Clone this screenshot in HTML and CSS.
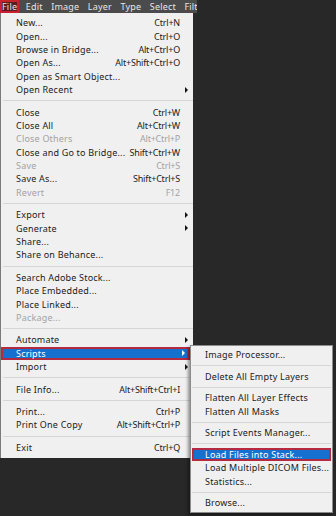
FILE: index.html
```html
<!DOCTYPE html>
<html>
<head>
  <title>File menu</title>
  <link rel="stylesheet" href="styles.css">
</head>
<body>
  <div class="menubar">
    <span class="top active">File</span>
    <span class="top">Edit</span>
    <span class="top">Image</span>
    <span class="top">Layer</span>
    <span class="top">Type</span>
    <span class="top">Select</span>
    <span class="top">Filter</span>
  </div>

  <div class="menu file-menu">
    <div class="row"><span>New...</span><span class="key">Ctrl+N</span><i></i></div>
    <div class="row"><span>Open...</span><span class="key">Ctrl+O</span><i></i></div>
    <div class="row"><span>Browse in Bridge...</span><span class="key">Alt+Ctrl+O</span><i></i></div>
    <div class="row"><span>Open As...</span><span class="key">Alt+Shift+Ctrl+O</span><i></i></div>
    <div class="row"><span>Open as Smart Object...</span><span class="key"></span><i></i></div>
    <div class="row"><span>Open Recent</span><span class="key"></span><i class="arrow"></i></div>
    <div class="sep"></div>
    <div class="row"><span>Close</span><span class="key">Ctrl+W</span><i></i></div>
    <div class="row"><span>Close All</span><span class="key">Alt+Ctrl+W</span><i></i></div>
    <div class="row off"><span>Close Others</span><span class="key">Alt+Ctrl+P</span><i></i></div>
    <div class="row"><span>Close and Go to Bridge...</span><span class="key">Shift+Ctrl+W</span><i></i></div>
    <div class="row off"><span>Save</span><span class="key">Ctrl+S</span><i></i></div>
    <div class="row"><span>Save As...</span><span class="key">Shift+Ctrl+S</span><i></i></div>
    <div class="row off"><span>Revert</span><span class="key">F12</span><i></i></div>
    <div class="sep"></div>
    <div class="row"><span>Export</span><span class="key"></span><i class="arrow"></i></div>
    <div class="row"><span>Generate</span><span class="key"></span><i class="arrow"></i></div>
    <div class="row"><span>Share...</span><span class="key"></span><i></i></div>
    <div class="row"><span>Share on Behance...</span><span class="key"></span><i></i></div>
    <div class="sep"></div>
    <div class="row"><span>Search Adobe Stock...</span><span class="key"></span><i></i></div>
    <div class="row"><span>Place Embedded...</span><span class="key"></span><i></i></div>
    <div class="row"><span>Place Linked...</span><span class="key"></span><i></i></div>
    <div class="row off"><span>Package...</span><span class="key"></span><i></i></div>
    <div class="sep"></div>
    <div class="row"><span>Automate</span><span class="key"></span><i class="arrow"></i></div>
    <div class="row hl"><span>Scripts</span><span class="key"></span><i class="arrow"></i></div>
    <div class="row"><span>Import</span><span class="key"></span><i class="arrow"></i></div>
    <div class="sep"></div>
    <div class="row"><span>File Info...</span><span class="key">Alt+Shift+Ctrl+I</span><i></i></div>
    <div class="sep"></div>
    <div class="row"><span>Print...</span><span class="key">Ctrl+P</span><i></i></div>
    <div class="row"><span>Print One Copy</span><span class="key">Alt+Shift+Ctrl+P</span><i></i></div>
    <div class="sep"></div>
    <div class="row"><span>Exit</span><span class="key">Ctrl+Q</span><i></i></div>
  </div>

  <div class="menu submenu">
    <div class="row"><span>Image Processor...</span></div>
    <div class="sep"></div>
    <div class="row"><span>Delete All Empty Layers</span></div>
    <div class="sep"></div>
    <div class="row"><span>Flatten All Layer Effects</span></div>
    <div class="row"><span>Flatten All Masks</span></div>
    <div class="sep"></div>
    <div class="row"><span>Script Events Manager...</span></div>
    <div class="sep"></div>
    <div class="row hl"><span>Load Files into Stack...</span></div>
    <div class="row"><span>Load Multiple DICOM Files...</span></div>
    <div class="row"><span>Statistics...</span></div>
    <div class="sep"></div>
    <div class="row"><span>Browse...</span></div>
  </div>
</body>
</html>
```

FILE: styles.css
```css
body {
  margin: 0;
  background: #282828;
  font-family: "Noto Sans", "Open Sans", sans-serif;
  font-size: 9px;
  letter-spacing: 0.2px;
  width: 336px;
  height: 516px;
  overflow: hidden;
  position: relative;
}
.menubar {
  width: 197px;
  height: 13px;
  background: #4b4b4b;
  display: flex;
  overflow: hidden;
  white-space: nowrap;
}
.top {
  flex-shrink: 0;
  color: #e6e6e6;
  line-height: 13px;
  padding: 0 2px;
  margin-right: 4.5px;
  font-size: 9px;
}
.top.active {
  background: #5a1c1c;
  box-shadow: inset 0 0 0 2px #c8202c;
}
.menu {
  background: #f0f0f0;
  color: #1b1b1b;
}
.file-menu {
  width: 192px;
  border-left: 1px solid #7a7a7a;
  padding: 3px 0 4px;
}
.row {
  display: grid;
  grid-template-columns: 1fr auto 13px;
  align-items: center;
  height: 13.4px;
  padding-left: 15px;
  white-space: nowrap;
}
.key {
  letter-spacing: -0.2px;
}
.row.off {
  color: #a3a3a3;
}
.row.hl {
  background: #1570d0;
  color: #fff;
  box-shadow: inset 0 0 0 2px #b52a3f;
  margin-right: 3px;
}
.arrow {
  justify-self: center;
  width: 0;
  height: 0;
  border-top: 3px solid transparent;
  border-bottom: 3px solid transparent;
  border-left: 3px solid #111;
}
.hl .arrow {
  border-left-color: #fff;
}
.sep {
  height: 1px;
  background: #d6d6d6;
  margin: 4px 0 4px 2px;
}
.submenu {
  position: absolute;
  left: 190px;
  top: 345px;
  width: 141px;
  height: 164px;
  border: 1px solid #8c8c8c;
  padding-top: 2px;
  box-shadow: -2px 2px 3px rgba(0, 0, 0, 0.4);
}
.submenu .row {
  display: flex;
  padding-left: 14px;
  height: 13.5px;
}
.submenu .row.hl {
  margin: 0 1px;
  padding-left: 13px;
}
.submenu .sep {
  margin: 3.5px 1px;
}
```
